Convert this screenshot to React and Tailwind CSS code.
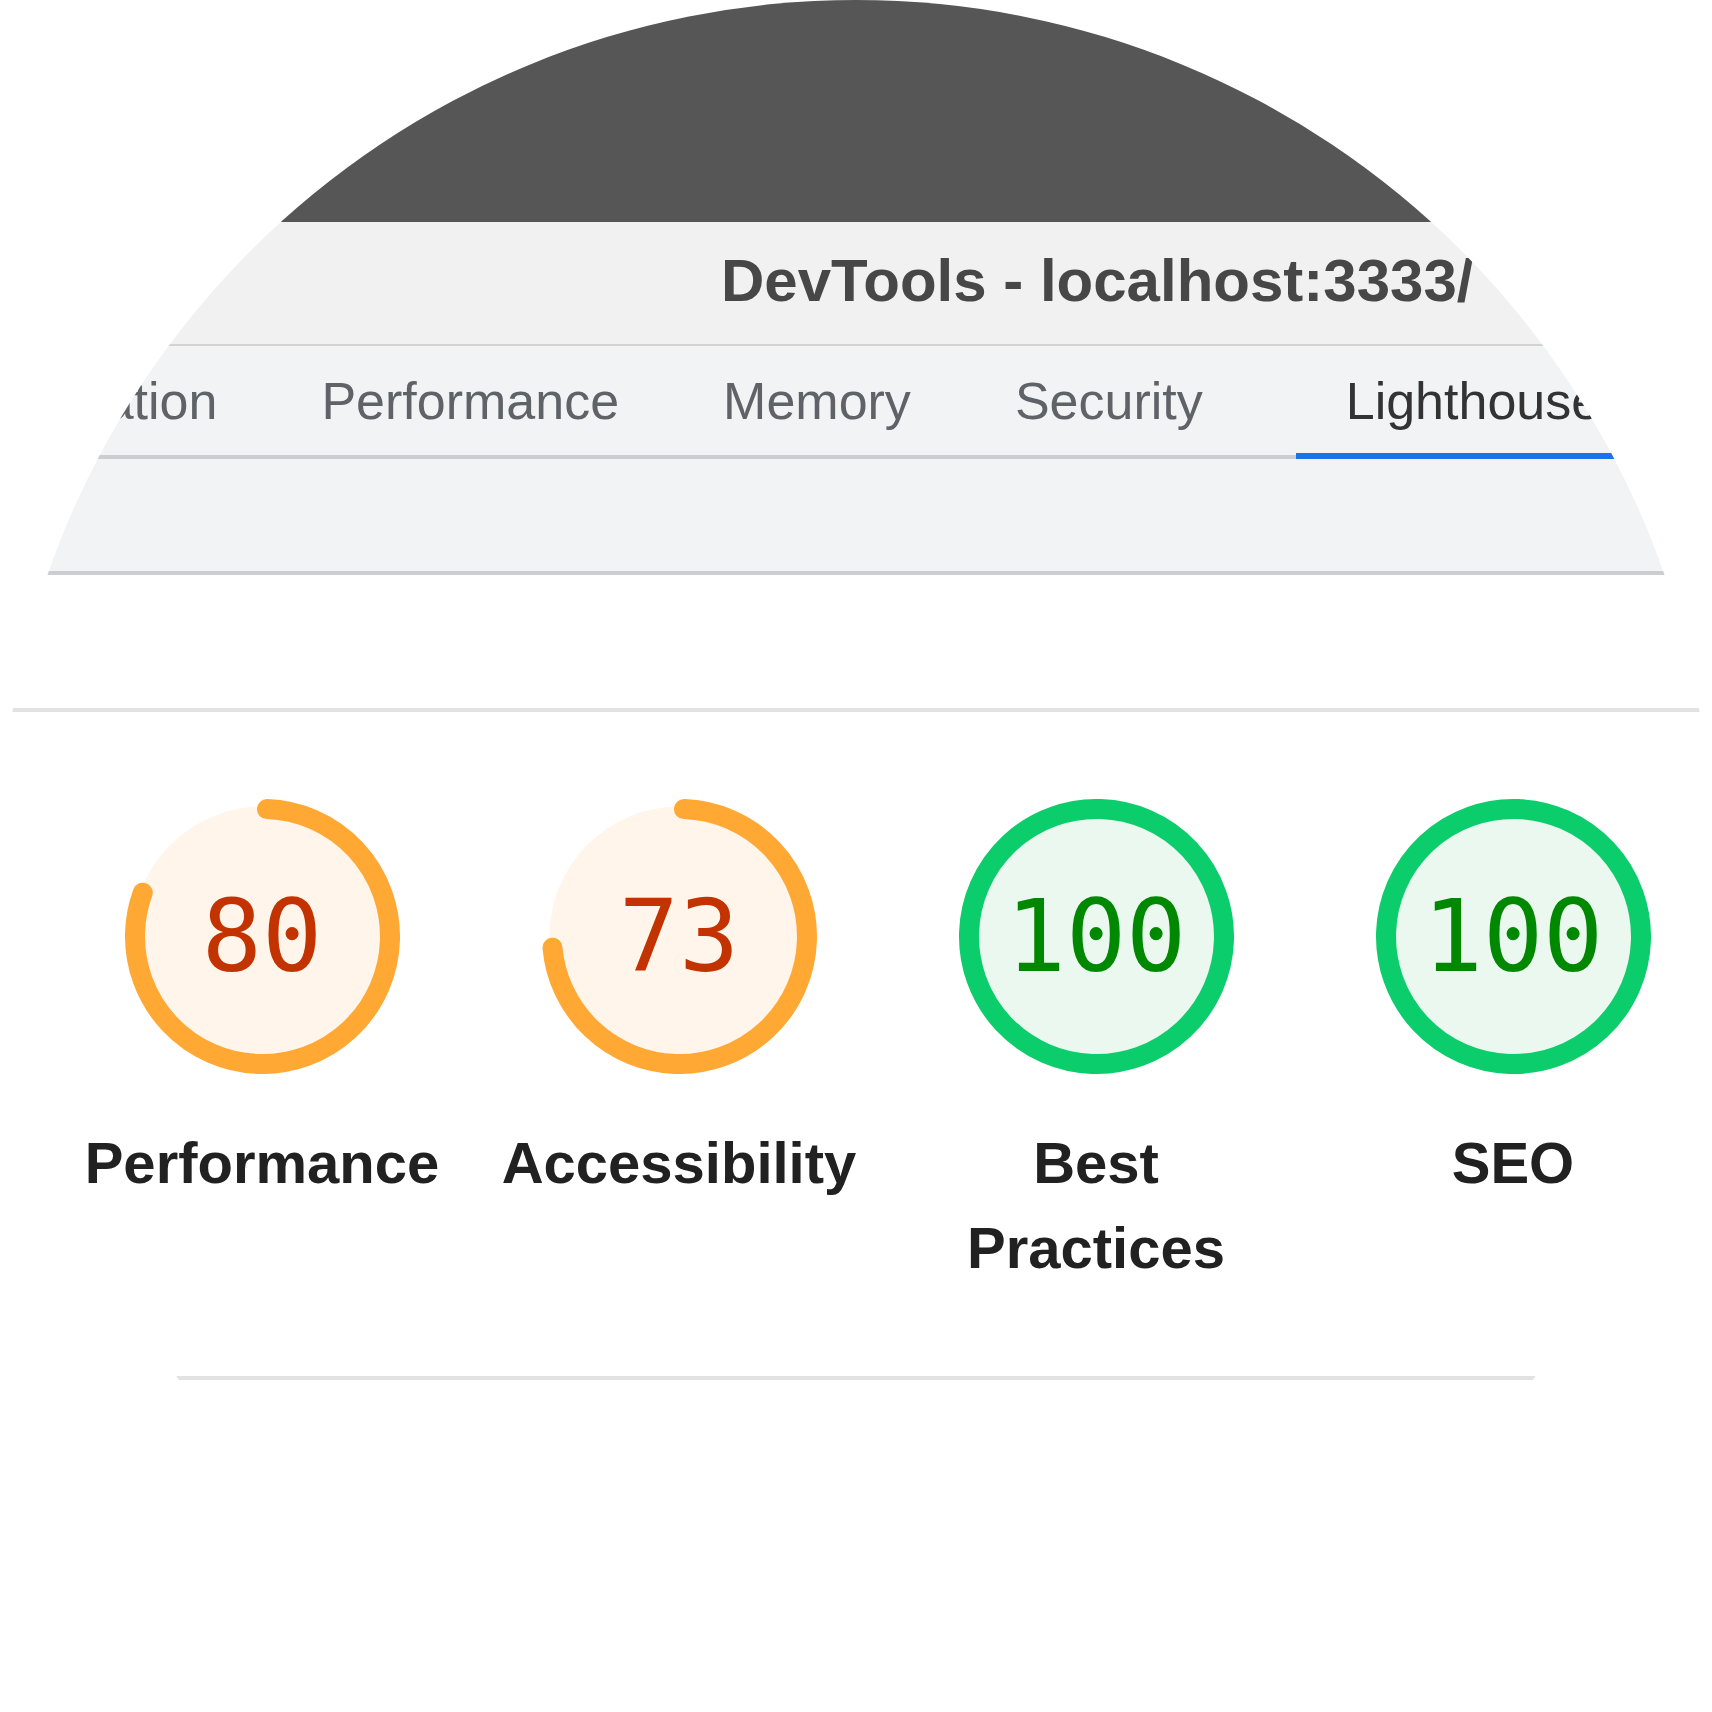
import React from 'react';

const C = 2 * Math.PI * 127.5;

const Gauge = ({ score, stroke, fill, text }) => (
  <div className="relative w-[275px] h-[275px]">
    <svg width="275" height="275" viewBox="0 0 275 275">
      <circle cx="137.5" cy="137.5" r="130" fill={fill} />
      <circle
        cx="137.5"
        cy="137.5"
        r="127.5"
        fill="none"
        stroke={stroke}
        strokeWidth="20"
        strokeLinecap="round"
        strokeDasharray={`${(score / 100) * C} ${C}`}
        transform="rotate(-88 137.5 137.5)"
      />
    </svg>
    <div
      className="absolute inset-0 flex items-center justify-center text-[100px] leading-none"
      style={{ color: text, fontFamily: '"DejaVu Sans Mono", "Liberation Mono", monospace' }}
    >
      {score}
    </div>
  </div>
);

const categories = [
  { label: 'Performance', score: 80, kind: 'avg' },
  { label: 'Accessibility', score: 73, kind: 'avg' },
  { label: 'Best Practices', score: 100, kind: 'pass' },
  { label: 'SEO', score: 100, kind: 'pass' },
];

const colors = {
  avg: { stroke: '#ffa834', fill: '#fff5eb', text: '#c33300' },
  pass: { stroke: '#0ccd6b', fill: '#eaf8ef', text: '#008800' },
};

const App = () => {
  return (
    <div className="w-[1712px] h-[1712px] bg-white font-['Liberation_Sans',Arial,sans-serif]">
      <div className="w-[1712px] h-[1712px] rounded-full overflow-hidden bg-white">
        {/* window chrome */}
        <div className="h-[222px] bg-[#555655]" />
        <div className="h-[124px] bg-[#f1f1f1] border-b-2 border-[#d3d3d3] flex items-center pl-[721px]">
          <span className="text-[60px] font-bold text-[#474747] leading-none pb-[4px]">DevTools - localhost:3333/</span>
        </div>

        {/* tabs */}
        <div className="h-[113px] bg-[#f1f3f4] border-b-4 border-[#cbcdd1] flex items-stretch">
          <div className="flex items-stretch ml-[-89px] text-[52px] text-[#5f6368] whitespace-nowrap">
            <div className="px-[52px] flex items-center">Application</div>
            <div className="px-[52px] flex items-center">Performance</div>
            <div className="px-[52px] flex items-center">Memory</div>
            <div className="px-[52px] flex items-center">Security</div>
            <div className="relative ml-[41px] pl-[50px] pr-[53px] flex items-center text-[#333333]">
              Lighthouse
              <span className="absolute left-0 right-0 -bottom-[4px] h-[6px] bg-[#1a73e8]" />
            </div>
          </div>
        </div>

        {/* toolbar */}
        <div className="h-[116px] bg-[#f1f3f4] border-b-4 border-[#cbcdd1]" />

        <div className="h-[133px]" />
        <div className="h-[4px] bg-[#e2e2e2]" />

        {/* scores */}
        <div className="flex items-start gap-[57px] pl-[82px] pt-[87px]">
          {categories.map((c) => (
            <div key={c.label} className="w-[360px] flex flex-col items-center">
              <Gauge score={c.score} {...colors[c.kind]} />
              <div className="mt-[46px] text-[58px] leading-[85px] font-bold text-[#212121] text-center">
                {c.label}
              </div>
            </div>
          ))}
        </div>

        <div className="mt-[86px] h-[4px] bg-[#e2e2e2]" />
      </div>
    </div>
  );
};

export default App;
